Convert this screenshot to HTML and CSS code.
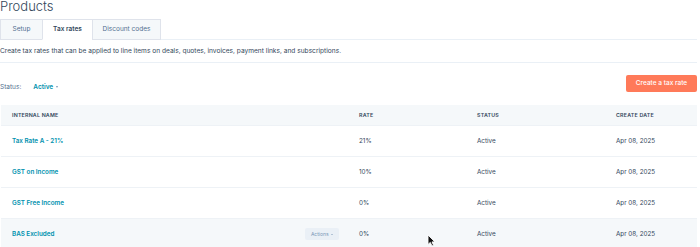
FILE: index.html
```html
<!DOCTYPE html>
<html>
<head>
<meta charset="utf-8">
<link rel="stylesheet" href="styles.css">
</head>
<body>
<div class="page">
  <h1 class="title">Products</h1>
  <div class="tabs">
    <div class="tab tab-setup">Setup</div>
    <div class="tab tab-active">Tax rates</div>
    <div class="tab tab-discount">Discount codes</div>
    <div class="tab-fill"></div>
  </div>
  <p class="desc">Create tax rates that can be applied to line items on deals, quotes, invoices, payment links, and subscriptions.</p>
  <div class="toolbar">
    <div class="status">
      <span class="status-label">Status:</span>
      <span class="status-value">Active <span class="caret"></span></span>
    </div>
    <button class="primary">Create a tax rate</button>
  </div>
  <table class="grid">
    <colgroup>
      <col class="c1"><col class="c2"><col class="c3"><col class="c4">
    </colgroup>
    <thead>
      <tr><th>Internal name</th><th>Rate</th><th>Status</th><th>Create date</th></tr>
    </thead>
    <tbody>
      <tr><td><a class="name">Tax Rate A - 21%</a></td><td>21%</td><td>Active</td><td>Apr 08, 2025</td></tr>
      <tr><td><a class="name">GST on Income</a></td><td>10%</td><td>Active</td><td>Apr 08, 2025</td></tr>
      <tr><td><a class="name">GST Free Income</a></td><td>0%</td><td>Active</td><td>Apr 08, 2025</td></tr>
      <tr class="hover"><td><div class="name-cell"><a class="name">BAS Excluded</a><span class="actions">Actions <span class="caret small"></span></span></div></td><td>0%</td><td>Active<svg class="cursor" width="9" height="13" viewBox="0 0 9 13"><path d="M1 1 L1 10.5 L3.3 8.4 L5 12 L6.6 11.3 L5 7.9 L8 7.9 Z" fill="#111" stroke="#fff" stroke-width="0.9" stroke-linejoin="round"/></svg></td><td>Apr 08, 2025</td></tr>
    </tbody>
  </table>
</div>
</body>
</html>
```
FILE: styles.css
```css
html, body {
  margin: 0;
  padding: 0;
  background: #fff;
}
body {
  font-family: "Inter", "Noto Sans", sans-serif;
  color: #33475b;
  width: 700px;
  height: 247px;
  overflow: hidden;
}
.page {
  padding-right: 3px;
}
.title {
  margin: 0;
  height: 19px;
  font-size: 13px;
  line-height: 12px;
  font-weight: 300;
  color: #33475b;
}
.tabs {
  display: flex;
  height: 21px;
}
.tab {
  box-sizing: border-box;
  height: 21px;
  font-size: 6.5px;
  line-height: 19px;
  text-align: center;
  color: #516f90;
  background: #f5f8fa;
  border: 1px solid #dfe3eb;
  border-right: none;
}
.tab-setup { width: 42px; }
.tab-active {
  width: 50px;
  background: #fff;
  color: #33475b;
  font-weight: 600;
  border-bottom-color: #fff;
}
.tab-discount {
  width: 69px;
  border-right: 1px solid #dfe3eb;
}
.tab-fill {
  flex: 1;
  border-bottom: 1px solid #eaf0f6;
}
.desc {
  margin: 0;
  height: 22px;
  border-bottom: 1px solid #eaf0f6;
  font-size: 6.6px;
  line-height: 22px;
  color: #33475b;
}
.toolbar {
  display: flex;
  justify-content: space-between;
  align-items: center;
  height: 42px;
  padding-top: 2px;
  box-sizing: border-box;
}
.status {
  display: flex;
  align-items: center;
  gap: 12px;
  font-size: 6.5px;
  padding-top: 3px;
}
.status-label { color: #516f90; }
.status-value {
  color: #0091ae;
  font-weight: 600;
}
.caret {
  display: inline-block;
  width: 0;
  height: 0;
  border-left: 1.6px solid transparent;
  border-right: 1.6px solid transparent;
  border-top: 2px solid #7c98b6;
  vertical-align: middle;
  margin-left: 1px;
}
.primary {
  width: 71px;
  height: 17px;
  margin-top: -4px;
  border: none;
  border-radius: 2px;
  background: #ff7a59;
  color: #fff;
  font-family: inherit;
  font-size: 6.5px;
  font-weight: 500;
  padding: 0;
}
.grid {
  margin-left: 1px;
  width: 696px;
  border-collapse: collapse;
  table-layout: fixed;
}
.c1 { width: 347px; }
.c2 { width: 118px; }
.c3 { width: 139px; }
.c4 { width: 92px; }
.grid th {
  height: 20px;
  padding: 0 11px;
  background: #f5f8fa;
  text-align: left;
  text-transform: uppercase;
  font-size: 5.3px;
  font-weight: 600;
  letter-spacing: 0.2px;
  color: #33475b;
}
.grid td {
  height: 30px;
  padding: 0 11px;
  border-top: 1px solid #eef2f6;
  font-size: 6.3px;
  color: #33475b;
  white-space: nowrap;
  position: relative;
}
.grid tr.hover td {
  background: #f5f8fa;
}
.name {
  color: #0091ae;
  font-weight: 600;
}
.name-cell {
  display: flex;
  justify-content: space-between;
  align-items: center;
}
.actions {
  width: 34px;
  height: 12px;
  margin-right: -2px;
  box-sizing: border-box;
  border-radius: 2px;
  background: #eaf0f6;
  color: #7c98b6;
  font-size: 5px;
  line-height: 12px;
  text-align: center;
}
.caret.small {
  border-left-width: 1.3px;
  border-right-width: 1.3px;
  border-top-width: 1.6px;
}
.cursor {
  position: absolute;
  left: -39px;
  top: 15px;
}
```
